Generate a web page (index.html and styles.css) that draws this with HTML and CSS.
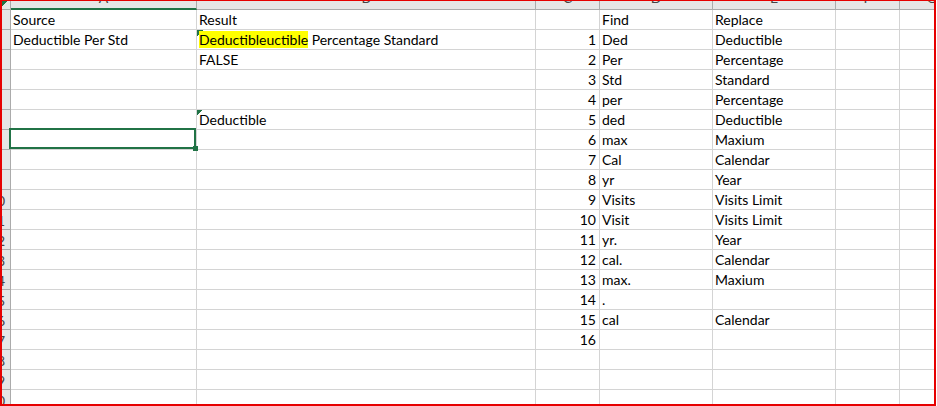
FILE: index.html
```html
<!DOCTYPE html>
<html lang="en">
<head>
<meta charset="utf-8">
<title>Sheet</title>
<link rel="stylesheet" href="styles.css">
</head>
<body>
<div class="sheet">
  <div class="row hdr">
    <div class="h corner"></div>
    <div class="h sel"><span>A</span></div>
    <div class="h"><span>B</span></div>
    <div class="h"><span>C</span></div>
    <div class="h"><span>D</span></div>
    <div class="h"><span>E</span></div>
    <div class="h"><span>F</span></div>
    <div class="h"><span>G</span></div>
  </div>
  <div class="row"><div class="rh"><span>1</span></div><div class="c">Source</div><div class="c">Result</div><div class="c num"></div><div class="c">Find</div><div class="c">Replace</div><div class="c"></div><div class="c"></div></div>
  <div class="row"><div class="rh"><span>2</span></div><div class="c">Deductible Per Std</div><div class="c tri"><span class="hl">Deductibleuctible</span> Percentage Standard</div><div class="c num">1</div><div class="c">Ded</div><div class="c">Deductible</div><div class="c"></div><div class="c"></div></div>
  <div class="row"><div class="rh"><span>3</span></div><div class="c"></div><div class="c">FALSE</div><div class="c num">2</div><div class="c">Per</div><div class="c">Percentage</div><div class="c"></div><div class="c"></div></div>
  <div class="row"><div class="rh"><span>4</span></div><div class="c"></div><div class="c"></div><div class="c num">3</div><div class="c">Std</div><div class="c">Standard</div><div class="c"></div><div class="c"></div></div>
  <div class="row"><div class="rh"><span>5</span></div><div class="c"></div><div class="c"></div><div class="c num">4</div><div class="c">per</div><div class="c">Percentage</div><div class="c"></div><div class="c"></div></div>
  <div class="row"><div class="rh"><span>6</span></div><div class="c"></div><div class="c tri">Deductible</div><div class="c num">5</div><div class="c">ded</div><div class="c">Deductible</div><div class="c"></div><div class="c"></div></div>
  <div class="row"><div class="rh sel"><span>7</span></div><div class="c active"></div><div class="c"></div><div class="c num">6</div><div class="c">max</div><div class="c">Maxium</div><div class="c"></div><div class="c"></div></div>
  <div class="row"><div class="rh"><span>8</span></div><div class="c"></div><div class="c"></div><div class="c num">7</div><div class="c">Cal</div><div class="c">Calendar</div><div class="c"></div><div class="c"></div></div>
  <div class="row"><div class="rh"><span>9</span></div><div class="c"></div><div class="c"></div><div class="c num">8</div><div class="c">yr</div><div class="c">Year</div><div class="c"></div><div class="c"></div></div>
  <div class="row"><div class="rh"><span>10</span></div><div class="c"></div><div class="c"></div><div class="c num">9</div><div class="c">Visits</div><div class="c">Visits Limit</div><div class="c"></div><div class="c"></div></div>
  <div class="row"><div class="rh"><span>11</span></div><div class="c"></div><div class="c"></div><div class="c num">10</div><div class="c">Visit</div><div class="c">Visits Limit</div><div class="c"></div><div class="c"></div></div>
  <div class="row"><div class="rh"><span>12</span></div><div class="c"></div><div class="c"></div><div class="c num">11</div><div class="c">yr.</div><div class="c">Year</div><div class="c"></div><div class="c"></div></div>
  <div class="row"><div class="rh"><span>13</span></div><div class="c"></div><div class="c"></div><div class="c num">12</div><div class="c">cal.</div><div class="c">Calendar</div><div class="c"></div><div class="c"></div></div>
  <div class="row"><div class="rh"><span>14</span></div><div class="c"></div><div class="c"></div><div class="c num">13</div><div class="c">max.</div><div class="c">Maxium</div><div class="c"></div><div class="c"></div></div>
  <div class="row"><div class="rh"><span>15</span></div><div class="c"></div><div class="c"></div><div class="c num">14</div><div class="c">.</div><div class="c"></div><div class="c"></div><div class="c"></div></div>
  <div class="row"><div class="rh"><span>16</span></div><div class="c"></div><div class="c"></div><div class="c num">15</div><div class="c">cal</div><div class="c">Calendar</div><div class="c"></div><div class="c"></div></div>
  <div class="row"><div class="rh"><span>17</span></div><div class="c"></div><div class="c"></div><div class="c num">16</div><div class="c"></div><div class="c"></div><div class="c"></div><div class="c"></div></div>
  <div class="row"><div class="rh"><span>18</span></div><div class="c"></div><div class="c"></div><div class="c num"></div><div class="c"></div><div class="c"></div><div class="c"></div><div class="c"></div></div>
  <div class="row"><div class="rh"><span>19</span></div><div class="c"></div><div class="c"></div><div class="c num"></div><div class="c"></div><div class="c"></div><div class="c"></div><div class="c"></div></div>
  <div class="row"><div class="rh"><span>20</span></div><div class="c"></div><div class="c"></div><div class="c num"></div><div class="c"></div><div class="c"></div><div class="c"></div><div class="c"></div></div>
</div>
</body>
</html>
```
FILE: styles.css
```css
* { box-sizing: border-box; }
html, body { margin: 0; padding: 0; background: #fff; }
body {
  font-family: Lato, "Open Sans", sans-serif;
  font-size: 14px;
  color: #000;
}
.sheet {
  width: 936px;
  height: 406px;
  border-style: solid;
  border-color: #e60000;
  border-width: 1px 2px 2px 2px;
  overflow: hidden;
  display: flex;
  flex-direction: column;
}
.row {
  flex: none;
  height: 20px;
  display: grid;
  grid-template-columns: 9px 186px 339px 64px 113px 123px 64px 64px;
}
.row.hdr {
  height: 9px;
  background: #e6e6e6;
}
.h {
  border-right: 1px solid #ababab;
  border-bottom: 1px solid #ababab;
  overflow: hidden;
  text-align: center;
  color: #444;
}
.h span {
  display: block;
  line-height: 17px;
  margin-top: -12px;
}
.h.sel {
  border-bottom: 2px solid #217346;
}
.h.corner {
  background: linear-gradient(135deg, #217346 50%, transparent 50%) no-repeat 0 0 / 6px 6px;
}
.rh {
  background: #e6e6e6;
  border-right: 1px solid #ababab;
  border-bottom: 1px solid #ababab;
  overflow: hidden;
  color: #444;
}
.rh span {
  display: block;
  width: 40px;
  margin-left: -25px;
  text-align: center;
  line-height: 19px;
  padding-top: 1px;
  white-space: nowrap;
}
.c {
  border-right: 1px solid #d4d4d4;
  border-bottom: 1px solid #d4d4d4;
  padding: 0 2px;
  line-height: 19px;
  white-space: nowrap;
  overflow: hidden;
}
.c.num {
  text-align: right;
  padding-right: 3px;
}
.c.tri {
  background: linear-gradient(135deg, #217346 50%, transparent 50%) no-repeat 0 0 / 6px 6px;
}
.hl { background: #ffff00; }
.c.active {
  position: relative;
  overflow: visible;
}
.c.active::before {
  content: "";
  position: absolute;
  left: -2px;
  top: -2px;
  right: 0;
  bottom: 0;
  border: 2px solid #217346;
}
.c.active::after {
  content: "";
  position: absolute;
  right: -2px;
  bottom: -2px;
  width: 5px;
  height: 5px;
  background: #217346;
}
```
